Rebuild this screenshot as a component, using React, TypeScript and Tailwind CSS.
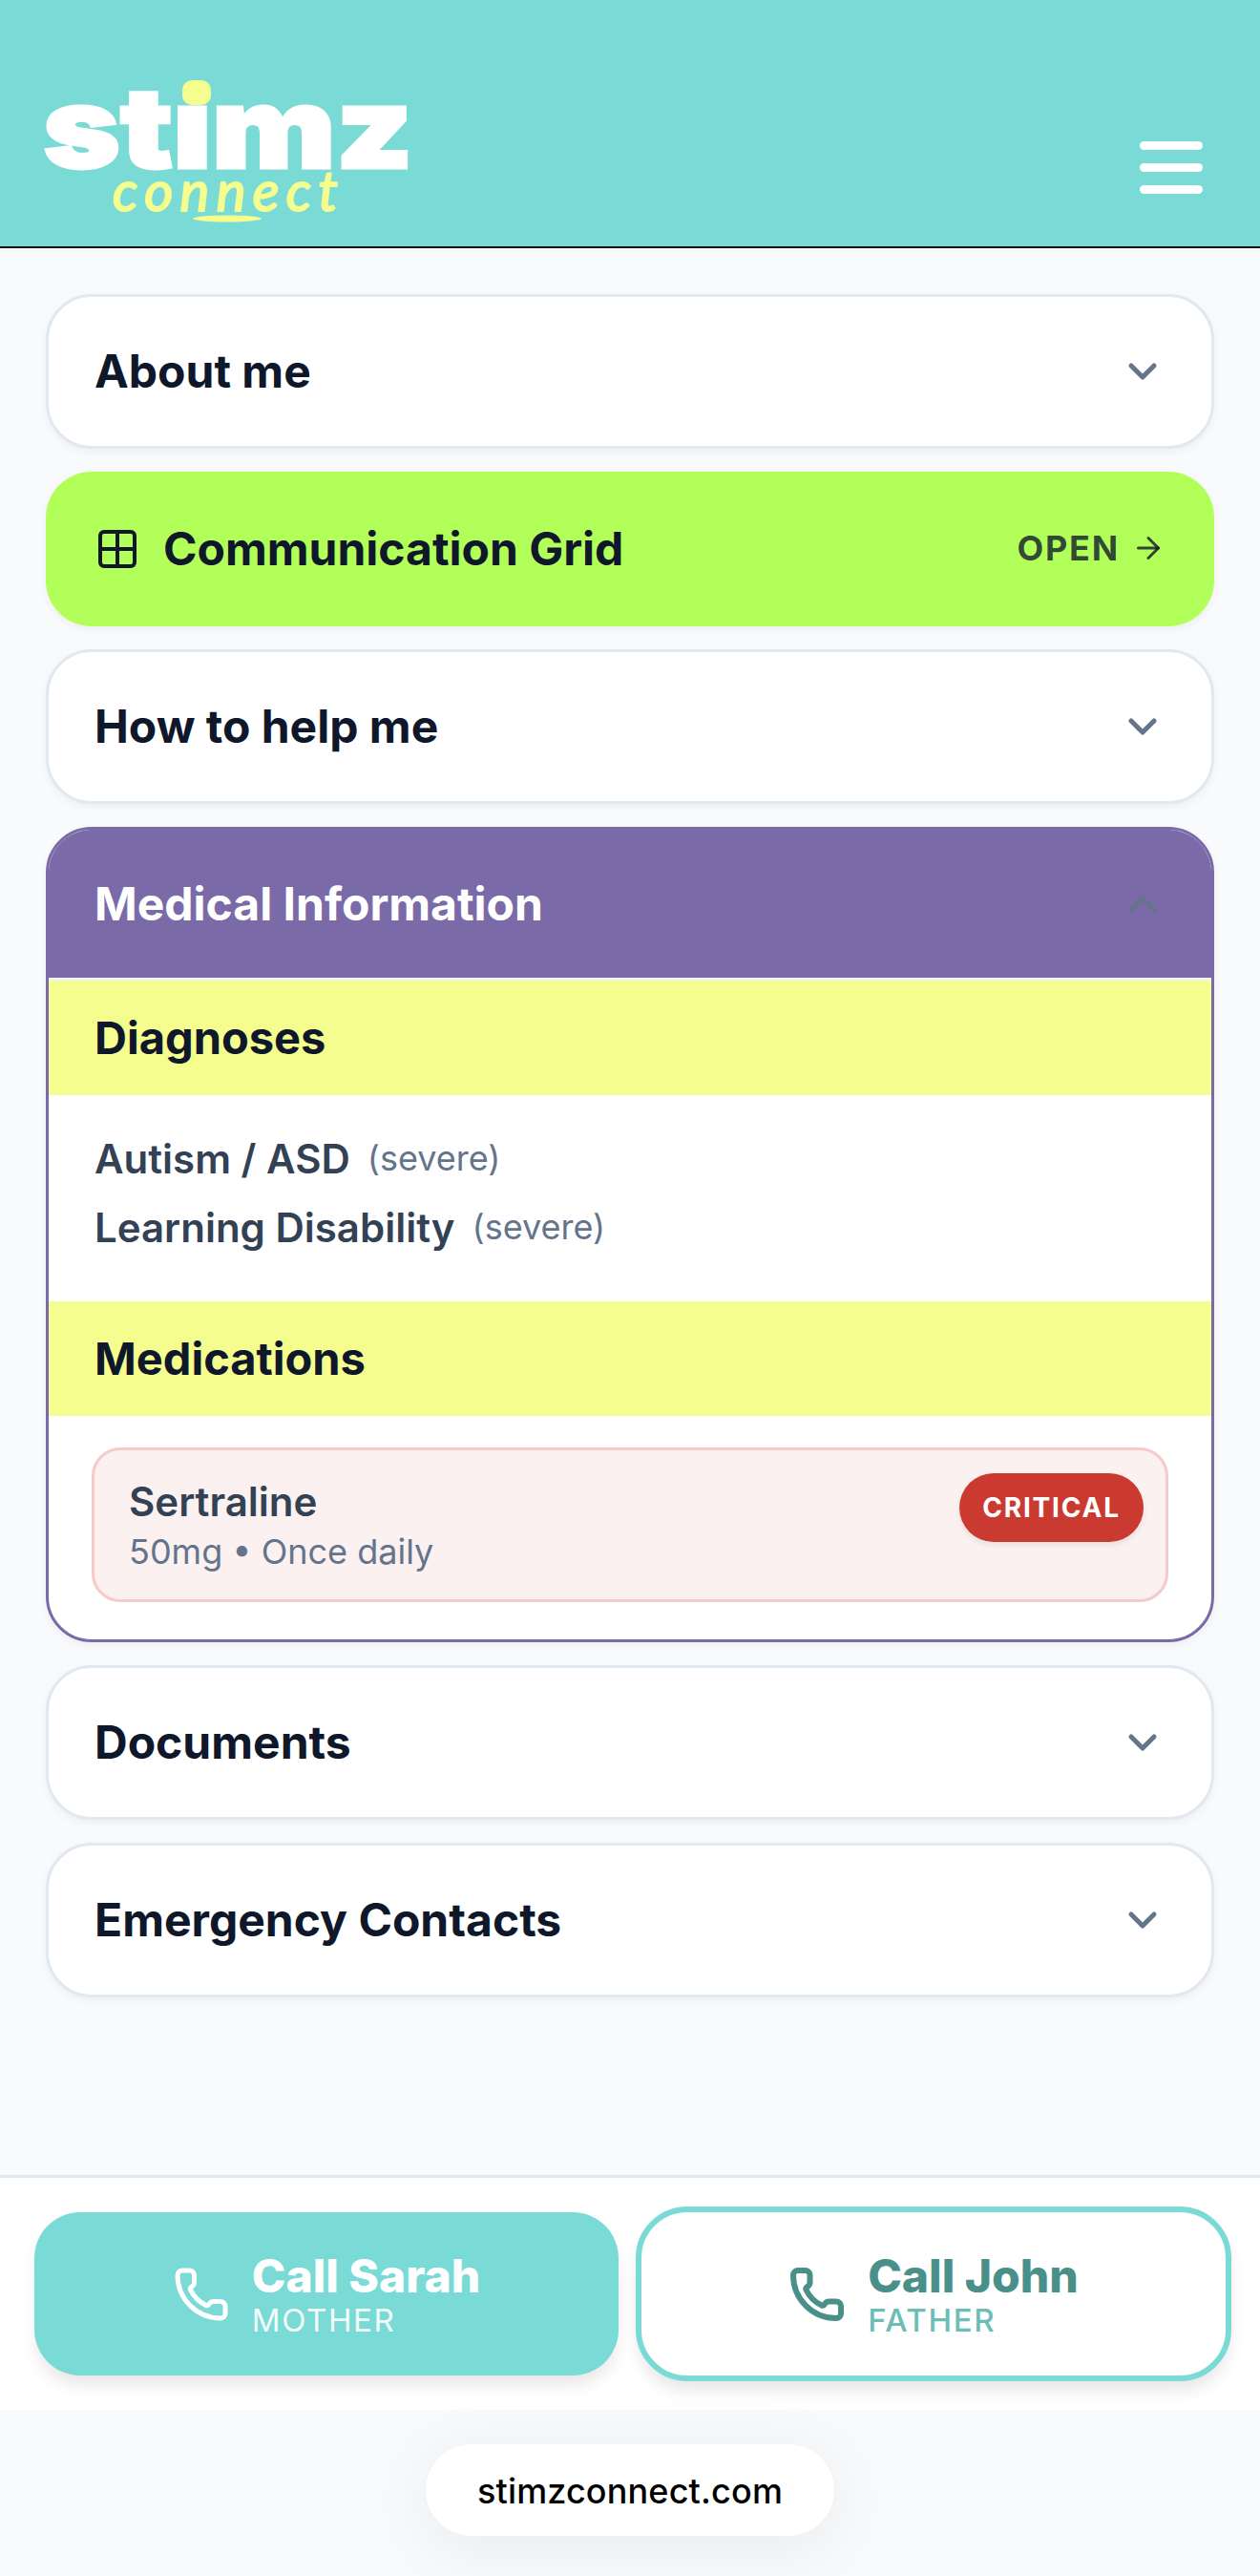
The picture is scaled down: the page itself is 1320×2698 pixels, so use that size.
import { ArrowRight, ChevronDown, ChevronUp, Grid2x2, Phone } from 'lucide-react';

function Logo() {
  return (
    <svg width="392" height="190" viewBox="44 44 392 190" className="block">
      {/* wordmark, kept as live text */}
      <text
        x="45"
        y="176"
        fontFamily="Inter, sans-serif"
        fontWeight="900"
        fontSize="117"
        textLength="388"
        lengthAdjust="spacingAndGlyphs"
        fill="#fff"
        stroke="#fff"
        strokeWidth="3"
      >
        stımz
      </text>
      <rect x="191" y="84" width="30" height="26" rx="10" fill="#f5fd8f" />
      <text
        x="118"
        y="221"
        fontFamily="Lato, sans-serif"
        fontStyle="italic"
        fontWeight="400"
        fontSize="58"
        letterSpacing="4"
        textLength="240"
        lengthAdjust="spacing"
        fill="#f5fd8f"
        stroke="#f5fd8f"
        strokeWidth="2"
        strokeLinejoin="round"
      >
        connect
      </text>
      <ellipse cx="238" cy="229" rx="36" ry="3.5" fill="#f5fd8f" />
    </svg>
  );
}

function CollapsedCard({ title }: { title: string }) {
  return (
    <div className="flex h-[162px] items-center justify-between rounded-[48px] border-[3px] border-[#e2e8f0] bg-white pl-[48px] pr-[48px] shadow-[0_3px_9px_rgba(0,0,0,0.05)]">
      <span className="text-[48px] font-bold leading-none text-[#0f172a]">{title}</span>
      <ChevronDown size={48} strokeWidth={2.5} className="text-[#64748b]" />
    </div>
  );
}

function SectionBar({ title }: { title: string }) {
  return (
    <div className="flex h-[120px] items-center bg-[#f5fd8f] pl-[48px] text-[47px] font-bold text-[#0f172a]">
      {title}
    </div>
  );
}

function Diagnosis({ name }: { name: string }) {
  return (
    <div className="flex h-[72px] items-center gap-[18px]">
      <span className="text-[42px] font-semibold text-[#334155]">{name}</span>
      <span className="text-[36px] text-[#64748b]">(severe)</span>
    </div>
  );
}

export default function App() {
  return (
    <div className="flex min-h-[2698px] flex-col bg-[#f8fafc] font-[Inter,sans-serif]">
      <header className="flex h-[260px] justify-between border-b-2 border-[#111] bg-[#7adbd6] pl-[44px] pr-[60px] pt-[44px]">
        <Logo />
        <div className="mt-[104px] flex w-[66px] flex-col gap-[14px]">
          <div className="h-[9px] rounded-full bg-white" />
          <div className="h-[9px] rounded-full bg-white" />
          <div className="h-[9px] rounded-full bg-white" />
        </div>
      </header>

      <main className="flex flex-1 flex-col gap-[24px] px-[48px] pt-[48px]">
        <CollapsedCard title="About me" />

        <div className="flex h-[162px] items-center justify-between rounded-[48px] bg-[#b2ff59] pl-[51px] pr-[51px] shadow-[0_3px_9px_rgba(0,0,0,0.05)]">
          <div className="flex items-center gap-[24px]">
            <Grid2x2 size={48} className="text-[#0f172a]" />
            <span className="text-[48px] font-bold leading-none text-[#0f172a]">Communication Grid</span>
          </div>
          <div className="-mt-[2px] flex items-center gap-[12px] text-[#0f172a]/80">
            <span className="text-[36px] font-bold leading-none tracking-[1.8px]">OPEN</span>
            <ArrowRight size={36} />
          </div>
        </div>

        <CollapsedCard title="How to help me" />

        <div className="overflow-hidden rounded-[48px] border-[3px] border-[#7b6aa8] bg-white shadow-[0_3px_9px_rgba(0,0,0,0.05)]">
          <div className="flex h-[158px] items-center justify-between border-b-[3px] border-[#f1f5f9] bg-[#7b6aa8] pl-[48px] pr-[48px]">
            <span className="text-[48px] font-bold leading-none text-white">Medical Information</span>
            <ChevronUp size={48} strokeWidth={2.5} className="text-[#64748b]" />
          </div>

          <SectionBar title="Diagnoses" />
          <div className="flex h-[216px] flex-col pl-[48px] pt-[30px]">
            <Diagnosis name="Autism / ASD" />
            <Diagnosis name="Learning Disability" />
          </div>

          <SectionBar title="Medications" />
          <div className="pb-[39px] pl-[45px] pr-[45px] pt-[33px]">
            <div className="flex h-[162px] items-start justify-between rounded-[30px] border-[3px] border-[#f7caca] bg-[#fcf1f1] pl-[36px] pr-[23px] pt-[26px]">
              <div>
                <p className="text-[42px] font-semibold leading-[56px] text-[#334155]">Sertraline</p>
                <p className="text-[36px] leading-[48px] text-[#64748b]">50mg • Once daily</p>
              </div>
              <span className="-mt-[2px] flex h-[72px] w-[193px] items-center justify-center rounded-[36px] bg-[#cb3a30] text-[28px] font-bold tracking-[1.8px] text-white shadow-[0_3px_6px_rgba(0,0,0,0.08)]">
                CRITICAL
              </span>
            </div>
          </div>
        </div>

        <CollapsedCard title="Documents" />
        <CollapsedCard title="Emergency Contacts" />
      </main>

      <div className="flex h-[246px] items-center gap-[18px] border-t-[3px] border-[#e2e8f0] bg-white pl-[36px] pr-[30px]">
        <button className="flex h-[171px] w-[612px] items-center justify-center gap-[23px] rounded-[48px] bg-[#7adbd6] text-white shadow-[0_12px_18px_-3px_rgba(0,0,0,0.1)]">
          <Phone size={60} />
          <span className="flex flex-col items-start">
            <span className="text-[48px] font-extrabold leading-[54px]">Call Sarah</span>
            <span className="mt-[1px] text-[33px] font-normal leading-[36px] tracking-[1.6px] opacity-90">MOTHER</span>
          </span>
        </button>
        <button className="flex h-[183px] w-[624px] items-center justify-center gap-[23px] rounded-[54px] border-[6px] border-[#7adbd6] bg-white text-[#4a908a] shadow-[0_12px_18px_-3px_rgba(0,0,0,0.1)]">
          <Phone size={60} strokeWidth={2.4} />
          <span className="flex flex-col items-start">
            <span className="text-[48px] font-extrabold leading-[54px]">Call John</span>
            <span className="mt-[1px] text-[33px] font-medium leading-[36px] tracking-[1.6px] text-[#6dbcb6]">FATHER</span>
          </span>
        </button>
      </div>

      <div className="flex h-[174px] justify-center pt-[36px]">
        <div className="flex h-[96px] w-[428px] items-center justify-center rounded-[48px] bg-white pt-[2px] text-[36px] font-medium tracking-[0.15px] text-black shadow-[0_12px_72px_rgba(0,0,0,0.07)]">
          stimzconnect.com
        </div>
      </div>
    </div>
  );
}
